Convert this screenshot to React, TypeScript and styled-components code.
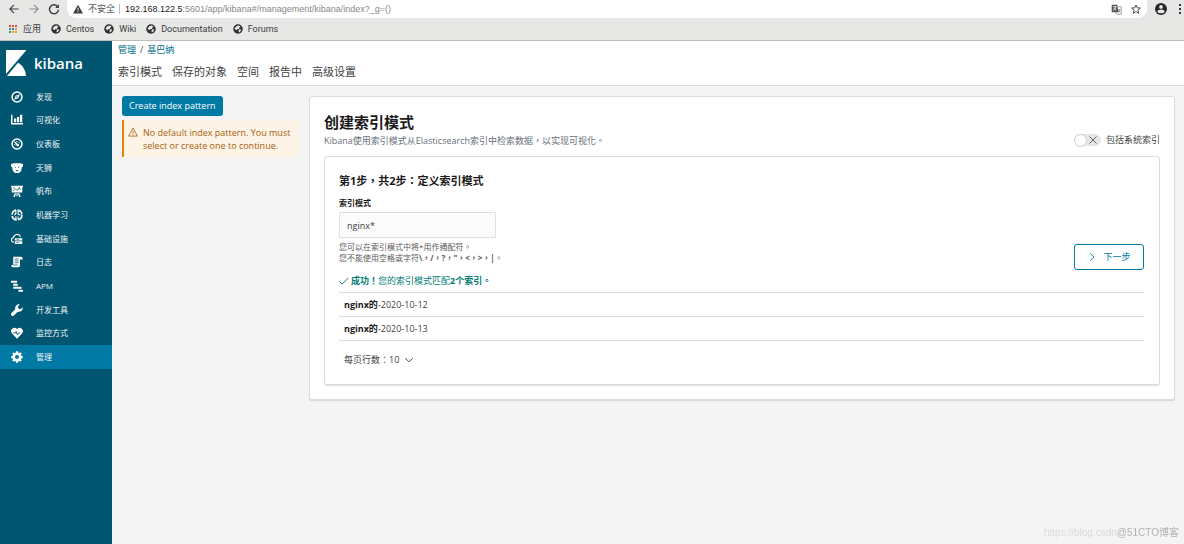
import React from "react";
import styled, { createGlobalStyle } from "styled-components";

const GlobalStyle = createGlobalStyle`
  *, *::before, *::after { box-sizing: border-box; }
  body {
    margin: 0;
    background: #f4f4f4;
    color: #3f3f3f;
    font-family: "Open Sans", "Noto Sans CJK TC", sans-serif;
    font-size: 9px;
    line-height: 14px;
  }
  button, input, select { font: inherit; color: inherit; margin: 0; }
  h1, h2, p, ul { margin: 0; padding: 0; }
  ul { list-style: none; }
  a { color: inherit; text-decoration: none; }
`;

const Page = styled.div`
  display: flex;
  flex-direction: column;
  min-height: 100vh;
`;

/* Browser frame */

const Browser = styled.header`
  background: #e7e7e6;
  border-bottom: 1px solid #bcbcba;
  color: #3a3d40;
  font-family: Roboto, "Noto Sans CJK SC", sans-serif;
`;

const AddressRow = styled.div`
  display: flex;
  align-items: center;
  height: 18px;
  padding-left: 7px;
`;

const IconButton = styled.button<{ $width: number }>`
  display: flex;
  flex: none;
  align-items: center;
  justify-content: center;
  width: ${(p) => p.$width}px;
  height: 18px;
  padding: 0;
  border: 0;
  background: none;
`;

const AddressBar = styled.div`
  display: flex;
  flex: 1;
  align-items: center;
  min-width: 0;
  height: 18px;
  margin-left: 6px;
  padding: 0 1px 0 6px;
  border-radius: 0 0 9px 9px;
  background: #fff;
`;

const Insecure = styled.span`
  margin-left: 5px;
  padding-right: 4px;
  border-right: 1px solid #bbb;
  color: #5a5d60;
  line-height: 10px;
`;

const Url = styled.div`
  flex: 1;
  min-width: 0;
  margin-left: 5px;
  overflow: hidden;
  color: #85888b;
  font-family: "Liberation Sans", sans-serif;
  white-space: nowrap;

  b { color: #222; font-weight: 400; }
`;

const Bookmarks = styled.nav`
  display: flex;
  align-items: center;
  gap: 10px;
  height: 22px;
  padding-left: 8px;
`;

const Bookmark = styled.a`
  display: flex;
  align-items: center;
  gap: 5px;
`;

/* Kibana shell */

const Shell = styled.div`
  display: flex;
  flex: 1;
`;

const Sidebar = styled.aside`
  flex: none;
  width: 112px;
  background: #005571;
  color: #fff;
`;

const Brand = styled.a`
  display: flex;
  align-items: center;
  gap: 7px;
  height: 44px;
  padding-left: 6px;
  font-size: 15px;
  font-weight: 600;
`;

const Menu = styled.ul`
  display: grid;
  grid-template-rows: repeat(12, 1fr);
  height: 284px;
`;

const MenuLink = styled.a<{ $active?: boolean }>`
  display: flex;
  align-items: center;
  gap: 13px;
  height: 100%;
  padding-left: 11px;
  background: ${(p) => (p.$active ? "#0079a5" : "transparent")};
  color: #f0f6f8;
  font-family: "Open Sans", "Noto Sans CJK SC", sans-serif;
  font-size: 8px;

  svg { color: #fff; }
`;

const Content = styled.div`
  display: flex;
  flex: 1;
  flex-direction: column;
  min-width: 0;
`;

const TopBar = styled.div`
  height: 45px;
  padding: 2px 6px 0;
  border-bottom: 1px solid #d9d9d9;
  background: #fff;
`;

const Breadcrumbs = styled.nav`
  display: flex;
  gap: 4px;

  a { color: #006e8a; }
`;

const Tabs = styled.nav`
  display: flex;
  gap: 10px;
  margin-top: 7px;
  font-size: 11px;
  line-height: 16px;
`;

const Main = styled.main`
  display: flex;
  align-items: flex-start;
  gap: 10px;
  padding: 10px 9px 10px 10px;
`;

const Side = styled.section`
  flex: none;
  width: 177px;
`;

const PrimaryButton = styled.button`
  display: block;
  height: 20px;
  padding: 0 7px;
  border: 0;
  border-radius: 3px;
  background: #0079a5;
  color: #fff;
`;

const Callout = styled.div`
  display: flex;
  gap: 5px;
  margin-top: 4px;
  padding: 6px 5px 5px 4px;
  border-left: 2px solid #e5830e;
  background: #fdf3e6;
  color: #a5620c;
  line-height: 13px;

  svg { flex: none; margin-top: 1px; }
`;

const Panel = styled.section<{ $inner?: boolean }>`
  flex: 1;
  min-width: 0;
  padding: ${(p) => (p.$inner ? "15px 15px 14px 14px" : "14px")};
  border: 1px solid #dcdcdc;
  border-radius: 3px;
  background: #fff;
  box-shadow: 0 1px 1px rgba(0, 0, 0, 0.12);
`;

const PanelHead = styled.div`
  display: flex;
  align-items: flex-end;
  justify-content: space-between;
  margin-bottom: 9px;
`;

const Title = styled.h1`
  color: #1a1a1a;
  font-size: 15px;
  line-height: 23px;
`;

const Subtitle = styled.p`
  color: #69707a;
  line-height: 13px;
`;

const Switch = styled.label`
  display: flex;
  align-items: center;
  gap: 5px;
`;

const SwitchInput = styled.input`
  position: absolute;
  width: 27px;
  height: 12px;
  margin: 0;
  opacity: 0;
`;

const Track = styled.span`
  display: flex;
  align-items: center;
  justify-content: space-between;
  width: 27px;
  height: 12px;
  padding-right: 4px;
  border-radius: 6px;
  background: #e6e6e6;

  &::before {
    content: "";
    width: 13px;
    height: 13px;
    border: 1px solid #cfcfcf;
    border-radius: 50%;
    background: #fff;
  }
`;

const StepTitle = styled.h2`
  color: #1a1a1a;
  font-size: 11px;
  line-height: 18px;
`;

const FormRow = styled.div`
  display: flex;
  align-items: flex-end;
  justify-content: space-between;
  margin-top: 7px;
`;

const Field = styled.div`
  font-size: 8px;
  line-height: 11px;
`;

const FieldLabel = styled.label`
  display: block;
  color: #1a1a1a;
  font-weight: 700;
`;

const TextInput = styled.input`
  display: block;
  width: 157px;
  height: 26px;
  margin: 4px 0 3px;
  padding: 0 7px;
  border: 1px solid #e0e0e0;
  border-radius: 0;
  background: #fbfbfb;
  font-size: 9px;
`;

const Hint = styled.p`
  color: #5a5a5a;
`;

const NextButton = styled.button`
  display: flex;
  align-items: center;
  justify-content: center;
  gap: 6px;
  width: 70px;
  height: 26px;
  margin-bottom: -7px;
  padding: 0;
  border: 1px solid #0079a5;
  border-radius: 3px;
  background: #fff;
  color: #0079a5;
`;

const Success = styled.p`
  display: flex;
  align-items: center;
  gap: 2px;
  margin-top: 11px;
  color: #017d73;
`;

const Matches = styled.table`
  width: 100%;
  margin-top: 4px;
  border-collapse: collapse;

  td {
    height: 24px;
    padding: 0 5px;
    border-top: 1px solid #dcdcdc;
    border-bottom: 1px solid #dcdcdc;
  }
  b { color: #1a1a1a; }
`;

const PageSize = styled.button`
  display: flex;
  align-items: center;
  gap: 5px;
  height: 20px;
  margin: 9px 0 0;
  padding: 0 5px;
  border: 0;
  background: none;
`;

const Watermark = styled.div`
  position: fixed;
  right: 5px;
  bottom: 4px;
  display: flex;
  color: #b2b2b2;
  font-family: "Liberation Sans", "Noto Sans CJK SC", sans-serif;
  font-size: 10px;

  span {
    color: #dadada;
  }
`;

type GlyphProps = { size?: number; width?: number; children: React.ReactNode };

const Line = ({ size = 12, width = 1.5, children }: GlyphProps) => (
  <svg width={size} height={size} viewBox="0 0 16 16" fill="none" stroke="currentColor" strokeWidth={width} aria-hidden="true">
    {children}
  </svg>
);

const Globe = () => (
  <svg width="10" height="10" viewBox="0 0 16 16" aria-hidden="true">
    <circle cx="8" cy="8" r="7.6" fill="#2d3134" />
    <path d="M6 3 9.500 2.500l2.500 2-2 1.500-.5 2-3 .2L5.500 10 2.500 7.500 4 5zM10 8.500l3 .2-1 3-2.500 1.800-.8-2.500z" fill="#e7e7e6" />
  </svg>
);

const AppsGlyph = () => (
  <svg width="10" height="10" viewBox="0 0 10 10" aria-hidden="true">
    {["#e24a3b", "#e24a3b", "#e24a3b", "#37a060", "#4285d4", "#e9a426", "#37a060", "#e9a426", "#e9a426"].map((c, i) => (
      <rect key={i} x={1 + (i % 3) * 3} y={1 + Math.floor(i / 3) * 3} width="2" height="2" fill={c} />
    ))}
  </svg>
);

const menu: { label: string; icon: React.ReactNode }[] = [
  {
    label: "发现",
    icon: <><circle cx="8" cy="8" r="6.6" strokeWidth="2" /><path d="m11.8 4.2-2 5.6-5.6 2 2-5.6z" fill="currentColor" stroke="none" /><circle cx="8" cy="8" r="1" fill="#005571" stroke="none" /></>,
  },
  {
    label: "可视化",
    icon: <path d="M0 1h2v11h14v2H0zM4 6h3v5H4zM8 4h3v7H8zM12 1h3v10h-3z" fill="currentColor" stroke="none" />,
  },
  {
    label: "仪表板",
    icon: <><circle cx="8" cy="8" r="6.600" strokeWidth="2" /><path d="m4.500 5 5 5M8 4v1.500M11.500 6l-1 .8M4.500 9h1.500" /><circle cx="9" cy="9.500" r="1.700" fill="currentColor" stroke="none" /></>,
  },
  {
    label: "天狮",
    icon: <path fillRule="evenodd" d="M0 2.500 4 1.500h8l4 1v3.500l-1.500 1L13.500 12 10.500 14.500h-5L2.500 12l-1-5L0 6zM4 6 6.500 8V6.500zm8 0L9.500 8V6.500zM6 10.500h4L8 12.500z" fill="currentColor" stroke="none" />,
  },
  {
    label: "帆布",
    icon: <><path d="M0 1h16v2h-1v7H1V3H0zM5 11h2l-2 5H3zM9 11h2l2 5h-2zM7.200 11h1.600v4H7.200z" fill="currentColor" stroke="none" /><path d="m3 8 3-3 2 2 3-2 2 .5M3 4h2M9 4h3" stroke="#005571" strokeWidth="1" /></>,
  },
  {
    label: "机器学习",
    icon: <><circle cx="8" cy="8" r="6.600" strokeWidth="2.200" strokeDasharray="8.400 2" /><path d="M6.500 2v4l-2 2M9.500 2v5l3 1M6.500 14V9.500M9.500 14v-4" /></>,
  },
  {
    label: "基础设施",
    icon: <><path d="M4 12H3.500a2.800 2.800 0 0 1-.3-5.600A5 5 0 0 1 12.800 5" /><path d="M5 7h10v3H5zM5 11h10v3.500H5z" fill="currentColor" stroke="none" /><path d="M7 8.500h4M7 12.700h4" stroke="#005571" strokeWidth=".8" /></>,
  },
  {
    label: "日志",
    icon: <><path d="M3 1h10.500A2 2 0 0 1 15.500 3v1.500H12V12c0 2-1 3-2.500 3H2C.8 15 .5 13.500.5 12H3z" fill="currentColor" stroke="none" /><path d="M5 4h5M5 6.500h5M5 9h5M3 12h6" stroke="#005571" strokeWidth="1" /></>,
  },
  {
    label: "APM",
    icon: <path d="M0 1h8v2.500H0zM3 5h6v2.500H3zM3 9h11v2.500H3zM10 13h6v2.500h-6z" fill="currentColor" stroke="none" />,
  },
  {
    label: "开发工具",
    icon: <path d="M15.400 4.200 12.700 6.900 9.900 6.100 9.100 3.300 11.800.6A5 5 0 0 0 5.800 7L.7 12.100a2.200 2.200 0 0 0 3.200 3.200L9 10.200a5 5 0 0 0 6.400-6z" fill="currentColor" stroke="none" />,
  },
  {
    label: "监控方式",
    icon: <><path d="M8 15.500 1.400 8.800A4.300 4.300 0 0 1 8 2.600a4.300 4.300 0 0 1 6.600 6.200z" fill="currentColor" stroke="none" /><path d="M3 8h2.500L7 6l1.500 4.500L10 8h2" stroke="#005571" strokeWidth="1.200" /></>,
  },
  {
    label: "管理",
    icon: <><circle cx="8" cy="8" r="4.400" strokeWidth="3.400" /><path d="M8 .4v3M8 12.600v3M.4 8h3M12.600 8h3M2.600 2.600l2 2M11.400 11.400l2 2M13.400 2.600l-2 2M4.600 11.400l-2 2" strokeWidth="3" /></>,
  },
];

const bookmarks = ["Centos", "Wiki", "Documentation", "Forums"];
const tabs = ["索引模式", "保存的对象", "空间", "报告中", "高级设置"];
const dates = ["2020-10-12", "2020-10-13"];

export default function App() {
  return (
    <Page>
      <GlobalStyle />
      <Browser>
        <AddressRow>
          <IconButton $width={14} aria-label="后退"><Line><path d="M14 8H3M8 2.500 2.500 8 8 13.500" /></Line></IconButton>
          <IconButton $width={26} aria-label="前进"><Line><path d="M2 8h11M8 2.500 13.500 8 8 13.500" stroke="#8d8f90" /></Line></IconButton>
          <IconButton $width={14} aria-label="重新加载"><Line width={2}><path d="M13 5a6 6 0 1 0 1 4" /><path d="M14.500 1.500v5h-5z" fill="currentColor" stroke="none" /></Line></IconButton>
          <AddressBar>
            <svg width="10" height="10" viewBox="0 0 16 16" aria-hidden="true">
              <path d="M8 1 16 15H0z" fill="#3a3d40" /><path d="M7.200 6h1.600v4.500H7.200zM7.200 11.500h1.600V13H7.200z" fill="#fff" />
            </svg>
            <Insecure>不安全</Insecure>
            <Url><b>192.168.122.5</b>:5601/app/kibana#/management/kibana/index?_g=()</Url>
            <IconButton $width={20} aria-label="翻译">
              <Line size={11} width={1.200}>
                <path d="M1 1h8l2 11H1z" fill="#55585a" stroke="none" />
                <path d="M10 4h5v11H8l-1-3" stroke="#999" />
                <path d="M3 4h5M5.500 3v1M7 4.500C6 7 5 8 3 9M4 6l3.500 3" stroke="#fff" />
                <path d="M11 8h3M12.500 8l-2 4M11 9.500l2.500 3" stroke="#777" />
              </Line>
            </IconButton>
            <IconButton $width={20} aria-label="收藏"><Line size={10}><path d="m8 1.500 2 4.600 5 .4-3.800 3.300 1.200 5L8 12.200l-4.400 2.600 1.200-5L1 6.500l5-.4z" /></Line></IconButton>
          </AddressBar>
          <IconButton $width={28} aria-label="用户">
            <svg width="12" height="12" viewBox="0 0 16 16" aria-hidden="true">
              <circle cx="8" cy="8" r="8" fill="#23282b" /><circle cx="8" cy="5.200" r="2.500" fill="#e7e7e6" /><path d="M3 11.500c1-4 9-4 10 0-2 3-8 3-10 0z" fill="#e7e7e6" />
            </svg>
          </IconButton>
          <IconButton $width={9} aria-label="菜单">
            <svg width="2" height="10" viewBox="0 0 2 10" fill="#33373a" aria-hidden="true">
              <rect width="2" height="2" y="0" /><rect width="2" height="2" y="4" /><rect width="2" height="2" y="8" />
            </svg>
          </IconButton>
        </AddressRow>
        <Bookmarks>
          <Bookmark href="#apps"><AppsGlyph />应用</Bookmark>
          {bookmarks.map((name) => (
            <Bookmark key={name} href={`#${name}`}><Globe />{name}</Bookmark>
          ))}
        </Bookmarks>
      </Browser>

      <Shell>
        <Sidebar>
          <Brand href="#home">
            <svg width="21" height="26" viewBox="0 0 21 26" fill="#fff" aria-hidden="true">
              <path d="M0 0h20.500L0 24z" /><path d="M12 12.800c4.500 2.300 7.500 7 8 13.200H1z" />
            </svg>
            kibana
          </Brand>
          <Menu>
            {menu.map(({ label, icon }, i) => (
              <li key={label}>
                <MenuLink href={`#menu-${i}`} $active={i === menu.length - 1}><Line>{icon}</Line>{label}</MenuLink>
              </li>
            ))}
          </Menu>
        </Sidebar>

        <Content>
          <TopBar>
            <Breadcrumbs><a href="#management">管理</a><span>/</span><a href="#kibana">基巴纳</a></Breadcrumbs>
            <Tabs>{tabs.map((tab) => <a key={tab} href={`#${tab}`}>{tab}</a>)}</Tabs>
          </TopBar>

          <Main>
            <Side>
              <PrimaryButton>Create index pattern</PrimaryButton>
              <Callout>
                <Line size={10} width={1.300}><path d="M8 1.500 15 14.500H1zM8 6v4.500M8 11.500V13" /></Line>
                <p>No default index pattern. You must select or create one to continue.</p>
              </Callout>
            </Side>

            <Panel>
              <PanelHead>
                <div>
                  <Title>创建索引模式</Title>
                  <Subtitle>Kibana使用索引模式从Elasticsearch索引中检索数据，以实现可视化。</Subtitle>
                </div>
                <Switch>
                  <SwitchInput type="checkbox" />
                  <Track><Line size={8}><path d="m1 1 14 14M15 1 1 15" /></Line></Track>
                  包括系统索引
                </Switch>
              </PanelHead>

              <Panel $inner>
                <StepTitle>第1步，共2步：定义索引模式</StepTitle>
                <FormRow>
                  <Field>
                    <FieldLabel htmlFor="pattern">索引模式</FieldLabel>
                    <TextInput id="pattern" defaultValue="nginx*" />
                    <Hint>您可以在索引模式中将*用作通配符。</Hint>
                    <Hint>您不能使用空格或字符<b>\，/，?，"，&lt;，&gt;，|</b>。</Hint>
                  </Field>
                  <NextButton><Line size={10}><path d="m5 2 6 6-6 6" /></Line>下一步</NextButton>
                </FormRow>
                <Success>
                  <Line size={10}><path d="m1 9 4 4L15 3" /></Line>
                  <span><b>成功！</b>您的索引模式匹配<b>2个索引。</b></span>
                </Success>
                <Matches>
                  <tbody>
                    {dates.map((date) => <tr key={date}><td><b>nginx的</b>-{date}</td></tr>)}
                  </tbody>
                </Matches>
                <PageSize>每页行数：10 <Line size={10}><path d="m2 5 6 6 6-6" /></Line></PageSize>
              </Panel>
            </Panel>
          </Main>
        </Content>
      </Shell>
      <Watermark><span>https://blog.csdn</span>@51CTO博客</Watermark>
    </Page>
  );
}
